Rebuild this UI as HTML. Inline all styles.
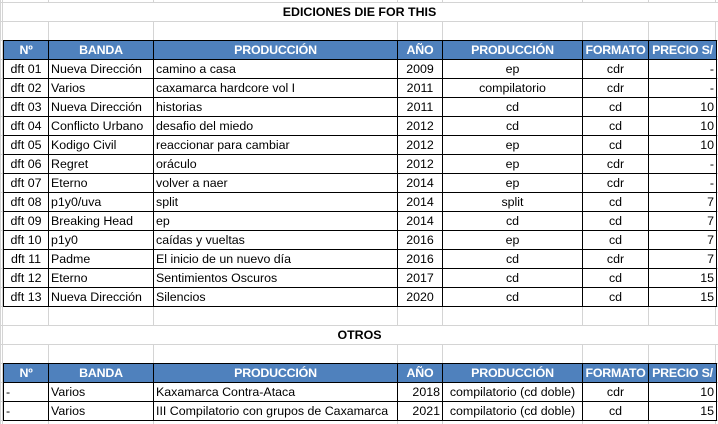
<!DOCTYPE html>
<html><head><meta charset="utf-8"><style>
body{margin:0;width:718px;height:424px;overflow:hidden;position:relative;font-family:"Liberation Sans",Arial,sans-serif;font-size:12.4px;
background-color:#fff;
background-image:
linear-gradient(to bottom,#d4d4d4 1px,transparent 1px),
linear-gradient(to right,#d4d4d4 1px,transparent 1px);
background-size:100% 19px,100% 100%;background-position:0 2px,0 0;}
.v{position:absolute;top:0;height:424px;width:1px;background:#d4d4d4}
.t{position:absolute;left:3px;width:713px;height:18px;background:#fff;text-align:center;font-weight:bold;line-height:18px;color:#000}
table{position:absolute;left:3px;width:713px;border-collapse:collapse;table-layout:fixed;background:#fff}
td{border:1px solid #000;height:18px;padding:0 2px;white-space:nowrap;overflow:hidden;line-height:18px;color:#000}
tr.h td{background:#4f81bd;color:#fff;font-weight:bold;text-align:center;padding:0;letter-spacing:-0.2px}
.c{text-align:center}.r{text-align:right}
</style></head><body>
<div class="v" style="left:2px"></div><div class="v" style="left:48px"></div><div class="v" style="left:153px"></div><div class="v" style="left:397px"></div><div class="v" style="left:442px"></div><div class="v" style="left:582px"></div><div class="v" style="left:648px"></div><div class="v" style="left:715px"></div>
<div class="t" style="top:3px">EDICIONES DIE FOR THIS</div>
<table style="top:40px">
<colgroup><col style="width:45px"><col style="width:105px"><col style="width:244px"><col style="width:45px"><col style="width:140px"><col style="width:66px"><col style="width:68px"></colgroup>
<tr class="h"><td>Nº</td><td>BANDA</td><td>PRODUCCIÓN</td><td>AÑO</td><td>PRODUCCIÓN</td><td>FORMATO</td><td>PRECIO S/</td></tr>
<tr><td class="c">dft 01</td><td>Nueva Dirección</td><td>camino a casa</td><td class="c">2009</td><td class="c">ep</td><td class="c">cdr</td><td class="r">-</td></tr>
<tr><td class="c">dft 02</td><td>Varios</td><td>caxamarca hardcore vol I</td><td class="c">2011</td><td class="c">compilatorio</td><td class="c">cdr</td><td class="r">-</td></tr>
<tr><td class="c">dft 03</td><td>Nueva Dirección</td><td>historias</td><td class="c">2011</td><td class="c">cd</td><td class="c">cd</td><td class="r">10</td></tr>
<tr><td class="c">dft 04</td><td>Conflicto Urbano</td><td>desafio del miedo</td><td class="c">2012</td><td class="c">cd</td><td class="c">cd</td><td class="r">10</td></tr>
<tr><td class="c">dft 05</td><td>Kodigo Civil</td><td>reaccionar para cambiar</td><td class="c">2012</td><td class="c">ep</td><td class="c">cd</td><td class="r">10</td></tr>
<tr><td class="c">dft 06</td><td>Regret</td><td>oráculo</td><td class="c">2012</td><td class="c">ep</td><td class="c">cdr</td><td class="r">-</td></tr>
<tr><td class="c">dft 07</td><td>Eterno</td><td>volver a naer</td><td class="c">2014</td><td class="c">ep</td><td class="c">cdr</td><td class="r">-</td></tr>
<tr><td class="c">dft 08</td><td>p1y0/uva</td><td>split</td><td class="c">2014</td><td class="c">split</td><td class="c">cd</td><td class="r">7</td></tr>
<tr><td class="c">dft 09</td><td>Breaking Head</td><td>ep</td><td class="c">2014</td><td class="c">cd</td><td class="c">cd</td><td class="r">7</td></tr>
<tr><td class="c">dft 10</td><td>p1y0</td><td>caídas y vueltas</td><td class="c">2016</td><td class="c">ep</td><td class="c">cd</td><td class="r">7</td></tr>
<tr><td class="c">dft 11</td><td>Padme</td><td>El inicio de un nuevo día</td><td class="c">2016</td><td class="c">cd</td><td class="c">cdr</td><td class="r">7</td></tr>
<tr><td class="c">dft 12</td><td>Eterno</td><td>Sentimientos Oscuros</td><td class="c">2017</td><td class="c">cd</td><td class="c">cd</td><td class="r">15</td></tr>
<tr><td class="c">dft 13</td><td>Nueva Dirección</td><td>Silencios</td><td class="c">2020</td><td class="c">cd</td><td class="c">cd</td><td class="r">15</td></tr>
</table>
<div class="t" style="top:326px">OTROS</div>
<table style="top:363px">
<colgroup><col style="width:45px"><col style="width:105px"><col style="width:244px"><col style="width:45px"><col style="width:140px"><col style="width:66px"><col style="width:68px"></colgroup>
<tr class="h"><td>Nº</td><td>BANDA</td><td>PRODUCCIÓN</td><td>AÑO</td><td>PRODUCCIÓN</td><td>FORMATO</td><td>PRECIO S/</td></tr>
<tr><td>-</td><td>Varios</td><td>Kaxamarca Contra-Ataca</td><td class="r">2018</td><td class="c">compilatorio (cd doble)</td><td class="c">cdr</td><td class="r">10</td></tr>
<tr><td>-</td><td>Varios</td><td>III Compilatorio con grupos de Caxamarca</td><td class="r">2021</td><td class="c">compilatorio (cd doble)</td><td class="c">cd</td><td class="r">15</td></tr>
</table>
</body></html>
